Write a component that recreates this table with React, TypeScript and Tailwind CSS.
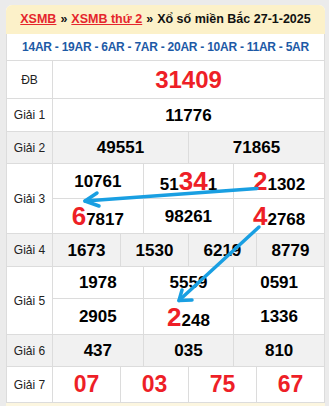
import React from 'react';

const RED = 'text-[#ee1f27]';

type Part = { t: string; big?: boolean };

// a number where some digits are drawn large and red
const Num: React.FC<{ parts: Part[] }> = ({ parts }) => (
  <span className="text-[17px] font-bold text-black">
    {parts.map((p, i) =>
      p.big ? (
        <span key={i} className={`text-[26px] leading-none ${RED}`}>{p.t}</span>
      ) : (
        <span key={i}>{p.t}</span>
      )
    )}
  </span>
);

const Label: React.FC<{ text: string; rowSpan?: number; gray?: boolean }> = ({ text, rowSpan, gray }) => (
  <td
    rowSpan={rowSpan}
    className={`border border-[#dcdcdc] text-center text-[12px] text-[#222] ${gray ? 'bg-[#f1f1f1]' : 'bg-white'}`}
  >
    {text}
  </td>
);

const Cell: React.FC<{ span: number; gray?: boolean; children: React.ReactNode }> = ({ span, gray, children }) => (
  <td colSpan={span} className={`border border-[#dcdcdc] text-center leading-none ${gray ? 'bg-[#f1f1f1]' : 'bg-white'}`}>
    {children}
  </td>
);

export default function App() {
  return (
    <div className="relative w-[329px] h-[406px] overflow-hidden bg-[#ebebeb] pt-[5px] pl-[6px] pr-[4px] font-['Liberation_Sans',Arial,sans-serif]">
      <div className="rounded-t-[6px] bg-white">
        <div className="h-[29px] rounded-t-[6px] bg-[#fcf1c9] flex items-center justify-center text-[12.5px] font-bold text-[#111] whitespace-nowrap">
          <span className="text-[#e5262c] underline">XSMB</span>
          <span className="mx-[4px]">»</span>
          <span className="text-[#e5262c] underline">XSMB thứ 2</span>
          <span className="mx-[4px]">»</span>
          <span>Xổ số miền Bắc 27-1-2025</span>
        </div>
        <div className="h-[26px] flex items-center justify-center text-[12px] font-bold tracking-[-0.25px] text-[#1d5aa6] border-x border-[#dcdcdc] whitespace-nowrap">
          14AR - 19AR - 6AR - 7AR - 20AR - 10AR - 11AR - 5AR
        </div>
        <table className="w-full table-fixed border-collapse">
          <colgroup>
            <col className="w-[46px]" />
            {Array.from({ length: 12 }).map((_, i) => (
              <col key={i} />
            ))}
          </colgroup>
          <tbody>
            <tr className="h-[38px]">
              <Label text="ĐB" />
              <Cell span={12}>
                <span className={`text-[24px] font-bold ${RED}`}>31409</span>
              </Cell>
            </tr>
            <tr className="h-[33px]">
              <Label text="Giải 1" />
              <Cell span={12}><Num parts={[{ t: '11776' }]} /></Cell>
            </tr>
            <tr className="h-[32px]">
              <Label text="Giải 2" gray />
              <Cell span={6} gray><Num parts={[{ t: '49551' }]} /></Cell>
              <Cell span={6} gray><Num parts={[{ t: '71865' }]} /></Cell>
            </tr>
            <tr className="h-[35px]">
              <Label text="Giải 3" rowSpan={2} />
              <Cell span={4}><Num parts={[{ t: '10761' }]} /></Cell>
              <Cell span={4}><Num parts={[{ t: '51' }, { t: '34', big: true }, { t: '1' }]} /></Cell>
              <Cell span={4}><Num parts={[{ t: '2', big: true }, { t: '1302' }]} /></Cell>
            </tr>
            <tr className="h-[35px]">
              <Cell span={4}><Num parts={[{ t: '6', big: true }, { t: '7817' }]} /></Cell>
              <Cell span={4}><Num parts={[{ t: '98261' }]} /></Cell>
              <Cell span={4}><Num parts={[{ t: '4', big: true }, { t: '2768' }]} /></Cell>
            </tr>
            <tr className="h-[33px]">
              <Label text="Giải 4" gray />
              <Cell span={3} gray><Num parts={[{ t: '1673' }]} /></Cell>
              <Cell span={3} gray><Num parts={[{ t: '1530' }]} /></Cell>
              <Cell span={3} gray><Num parts={[{ t: '6219' }]} /></Cell>
              <Cell span={3} gray><Num parts={[{ t: '8779' }]} /></Cell>
            </tr>
            <tr className="h-[32px]">
              <Label text="Giải 5" rowSpan={2} />
              <Cell span={4}><Num parts={[{ t: '1978' }]} /></Cell>
              <Cell span={4}><Num parts={[{ t: '5559' }]} /></Cell>
              <Cell span={4}><Num parts={[{ t: '0591' }]} /></Cell>
            </tr>
            <tr className="h-[36px]">
              <Cell span={4}><Num parts={[{ t: '2905' }]} /></Cell>
              <Cell span={4}><Num parts={[{ t: '2', big: true }, { t: '248' }]} /></Cell>
              <Cell span={4}><Num parts={[{ t: '1336' }]} /></Cell>
            </tr>
            <tr className="h-[32px]">
              <Label text="Giải 6" gray />
              <Cell span={4} gray><Num parts={[{ t: '437' }]} /></Cell>
              <Cell span={4} gray><Num parts={[{ t: '035' }]} /></Cell>
              <Cell span={4} gray><Num parts={[{ t: '810' }]} /></Cell>
            </tr>
            <tr className="h-[36px]">
              <Label text="Giải 7" />
              {['07', '03', '75', '67'].map((n) => (
                <Cell key={n} span={3}>
                  <span className={`text-[23px] font-bold ${RED}`}>{n}</span>
                </Cell>
              ))}
            </tr>
          </tbody>
        </table>
        <div className="h-[10px] bg-[#fcf6e0]" />
      </div>

      {/* arrows drawn over the table */}
      <svg className="pointer-events-none absolute left-0 top-0" width="329" height="406" viewBox="0 0 329 406">
        <g stroke="#199fe2" strokeWidth="3.5" strokeLinecap="round" strokeLinejoin="round" fill="none">
          <line x1="257" y1="188.5" x2="85" y2="201" />
          <polyline points="97,193 85,201 99,206" />
          <line x1="259" y1="227" x2="179" y2="300.5" />
          <polyline points="182,290 179,300.5 192,300" />
        </g>
      </svg>
    </div>
  );
}
